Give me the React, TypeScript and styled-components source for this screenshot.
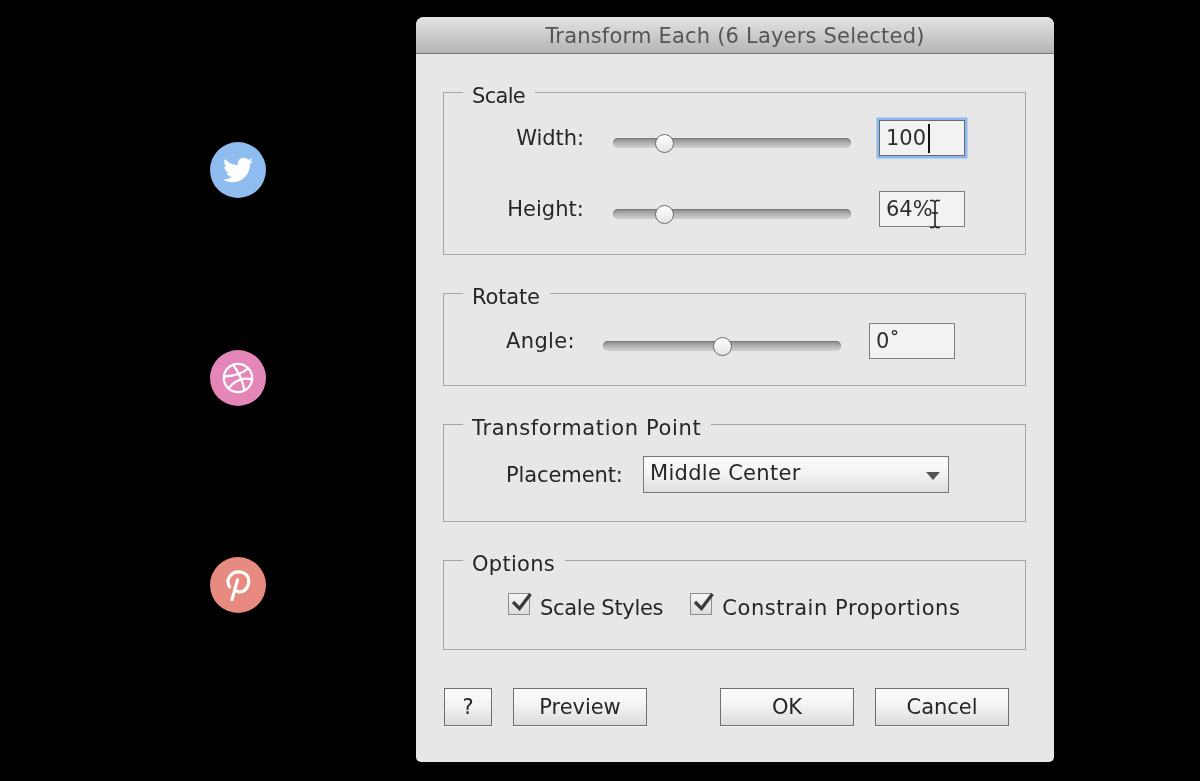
import styled, { createGlobalStyle } from "styled-components";
import { FaTwitter } from "react-icons/fa";
import { Dribbble } from "lucide-react";

const GlobalStyle = createGlobalStyle`
  html, body {
    margin: 0;
    padding: 0;
    background: #000;
    overflow: hidden;
  }
  * {
    box-sizing: border-box;
  }
`;

const Slider = ({ value }: { value: number }) => (
  <SliderTrack>
    <SliderKnob style={{ left: `${value}%` }} />
  </SliderTrack>
);

const Checkbox = ({ label, tracking }: { label: string; tracking: number }) => (
  <CheckLabel $tracking={tracking}>
    <CheckBoxBox>
      <svg width="26" height="24" viewBox="0 0 26 24">
        <path d="M4 8 L10.5 14.5 L21.5 0" fill="none" stroke="#3a3a3a" strokeWidth="3.2" />
      </svg>
    </CheckBoxBox>
    {label}
  </CheckLabel>
);

export default function App() {
  return (
    <Page>
      <GlobalStyle />
      <SocialColumn>
        <SocialCircle $color="#8fbdf0">
          <FaTwitter size={30} />
        </SocialCircle>
        <SocialCircle $color="#e586b8">
          <Dribbble size={34} strokeWidth={1.6} />
        </SocialCircle>
        <SocialCircle $color="#e78a80">
          <svg width="28" height="32" viewBox="0 -1 30 34">
            <path
              d="M6 18 C1 10 8 2 15.5 2 C24 2 28 8.5 26 15.5 C24 22.5 18 25 14 22.5 M14.5 10.5 L8.5 32"
              fill="none"
              stroke="#fff"
              strokeWidth="3.4"
              strokeLinecap="round"
            />
          </svg>
        </SocialCircle>
      </SocialColumn>

      <Dialog>
        <TitleBar>Transform Each (6 Layers Selected)</TitleBar>
        <DialogBody>
          <Group $height={180}>
            <GroupLegend $tracking={-0.7}>Scale</GroupLegend>
            <ScaleRow $top={10}>
              <ScaleLabel $tracking={-0.05}>Width:</ScaleLabel>
              <Slider value={21.5} />
              <FocusedInput>
                100
                <Caret />
              </FocusedInput>
            </ScaleRow>
            <ScaleRow $top={34}>
              <ScaleLabel $tracking={0.05}>Height:</ScaleLabel>
              <Slider value={21.5} />
              <TextInput>
                64%
                <IBeam width="14" height="30" viewBox="0 0 14 30">
                  <path
                    d="M2 1.5 H5.5 L7 3 L8.5 1.5 H12 M7 3 V27 M2 28.5 H5.5 L7 27 L8.5 28.5 H12 M4 14 H10"
                    fill="none"
                    stroke="#222"
                    strokeWidth="1.6"
                  />
                </IBeam>
              </TextInput>
            </ScaleRow>
          </Group>

          <Group $height={110}>
            <GroupLegend $tracking={-0.15}>Rotate</GroupLegend>
            <RotateRow>
              <FieldLabel $tracking={0.35}>Angle:</FieldLabel>
              <Slider value={50} />
              <TextInput>0˚</TextInput>
            </RotateRow>
          </Group>

          <Group $height={115}>
            <GroupLegend $tracking={0.65}>Transformation Point</GroupLegend>
            <PlacementRow>
              <FieldLabel $tracking={-0.1}>Placement:</FieldLabel>
              <SelectBox>
                Middle Center
                <SelectArrow />
              </SelectBox>
            </PlacementRow>
          </Group>

          <Group $height={107}>
            <GroupLegend $tracking={0.27}>Options</GroupLegend>
            <OptionsRow>
              <Checkbox label="Scale Styles" tracking={-0.3} />
              <Checkbox label="Constrain Proportions" tracking={0.55} />
            </OptionsRow>
          </Group>

          <ButtonBar>
            <ButtonSet>
              <DialogButton $width={48}>?</DialogButton>
              <DialogButton $width={134}>Preview</DialogButton>
            </ButtonSet>
            <ButtonSet>
              <DialogButton $width={134}>OK</DialogButton>
              <DialogButton $width={134}>Cancel</DialogButton>
            </ButtonSet>
          </ButtonBar>
        </DialogBody>
      </Dialog>
    </Page>
  );
}

const Page = styled.div`
  display: flex;
  align-items: flex-start;
  width: 1200px;
  height: 781px;
  padding: 17px 0 0 210px;
  background: #000;
  font-family: "DejaVu Sans", "Open Sans", sans-serif;
  font-size: 21px;
  color: #262626;
  filter: blur(0.4px);
`;

const SocialColumn = styled.div`
  display: flex;
  flex-direction: column;
  gap: 151.5px;
  width: 56px;
  margin-top: 125px;
`;

const SocialCircle = styled.div<{ $color: string }>`
  display: flex;
  align-items: center;
  justify-content: center;
  width: 56px;
  height: 56px;
  border-radius: 50%;
  background: ${(p) => p.$color};
  color: #fff;
`;

const Dialog = styled.div`
  display: flex;
  flex-direction: column;
  width: 638px;
  height: 745px;
  margin-left: 150px;
  border-radius: 8px 8px 5px 5px;
  background: #e7e7e7;
  overflow: hidden;
`;

const TitleBar = styled.div`
  display: flex;
  align-items: center;
  justify-content: center;
  height: 37px;
  padding-top: 2px;
  background: linear-gradient(#e4e4e4, #b4b4b4);
  border-bottom: 1px solid #777;
  color: #555;
  letter-spacing: 0.2px;
`;

const DialogBody = styled.div`
  display: flex;
  flex-direction: column;
  padding: 21px 28px 0 27px;
`;

const Group = styled.fieldset<{ $height: number }>`
  height: ${(p) => p.$height}px;
  margin: 0 0 21px;
  padding: 0;
  border: 1px solid #a5a5a5;
  min-width: 0;
`;

const GroupLegend = styled.legend<{ $tracking: number }>`
  margin-left: 19px;
  padding: 8px 10px 0 9px;
  line-height: 26px;
  font-size: 21px;
  letter-spacing: ${(p) => p.$tracking}px;
`;

const ScaleRow = styled.div<{ $top: number }>`
  display: flex;
  align-items: center;
  height: 37px;
  margin-top: ${(p) => p.$top}px;
`;

const ScaleLabel = styled.span<{ $tracking: number }>`
  width: 140px;
  text-align: right;
  margin-right: 29px;
  letter-spacing: ${(p) => p.$tracking}px;
`;

const RotateRow = styled.div`
  display: flex;
  align-items: center;
  height: 37px;
  margin-top: 12px;
  padding-left: 62px;
`;

const FieldLabel = styled.span<{ $tracking: number }>`
  width: 97px;
  white-space: nowrap;
  letter-spacing: ${(p) => p.$tracking}px;
`;

const SliderTrack = styled.div`
  position: relative;
  flex: none;
  width: 238px;
  height: 10px;
  margin: 10px 28px 0 0;
  border-radius: 5px;
  background: linear-gradient(#8a8a8a, #b5b5b5 55%, #d2d2d2);
  box-shadow: inset 0 1px 1px #777;
`;

const SliderKnob = styled.div`
  position: absolute;
  top: -4px;
  width: 19px;
  height: 19px;
  margin-left: -9.5px;
  border-radius: 50%;
  border: 1.5px solid #6e6e6e;
  background: linear-gradient(#fff, #e4e4e4);
`;

const TextInput = styled.div`
  position: relative;
  flex: none;
  display: flex;
  align-items: center;
  width: 86px;
  height: 36px;
  padding: 1px 0 0 6px;
  border: 1.5px solid #7d7d7d;
  background: #f2f2f2;
  letter-spacing: 0;
  line-height: 1;
  color: #2e2e2e;
`;

const FocusedInput = styled(TextInput)`
  border-color: #6b6b6b;
  box-shadow: 0 0 0 2.5px #8ab9ef;
`;

const Caret = styled.span`
  display: inline-block;
  width: 1.5px;
  height: 29px;
  margin-left: 2px;
  background: #111;
`;

const IBeam = styled.svg`
  position: absolute;
  left: 48px;
  top: 7px;
`;

const PlacementRow = styled.div`
  display: flex;
  align-items: center;
  height: 37px;
  margin-top: 15px;
  padding-left: 62px;
`;

const SelectBox = styled.div`
  display: flex;
  align-items: center;
  justify-content: space-between;
  width: 306px;
  height: 37px;
  margin-left: 40px;
  padding: 0 8px 4px 6px;
  border: 1.5px solid #777;
  background: linear-gradient(#fbfbfb, #f4f4f4 45%, #dfdfdf);
  letter-spacing: 0.3px;
`;

const SelectArrow = styled.span`
  width: 0;
  height: 0;
  margin-top: 6px;
  border-left: 7px solid transparent;
  border-right: 7px solid transparent;
  border-top: 8px solid #555;
`;

const OptionsRow = styled.div`
  display: flex;
  align-items: center;
  gap: 27px;
  padding: 19px 0 0 64px;
`;

const CheckLabel = styled.label<{ $tracking: number }>`
  display: flex;
  align-items: center;
  gap: 10px;
  letter-spacing: ${(p) => p.$tracking}px;
`;

const CheckBoxBox = styled.span`
  position: relative;
  display: block;
  width: 22px;
  height: 22px;
  margin-top: -8px;
  border: 1.5px solid #8c8c8c;
  background: linear-gradient(#f5f5f5, #dcdcdc);

  svg {
    position: absolute;
    left: 0;
    top: 0;
    overflow: visible;
  }
`;

const ButtonBar = styled.div`
  display: flex;
  justify-content: space-between;
  margin-top: 17px;
  padding: 0 17px 0 1px;
`;

const ButtonSet = styled.div`
  display: flex;
  gap: 21px;
`;

const DialogButton = styled.button<{ $width: number }>`
  width: ${(p) => p.$width}px;
  height: 38px;
  padding: 0;
  border: 1.5px solid #6f6f6f;
  background: linear-gradient(#fcfcfc, #f3f3f3 45%, #dcdcdc);
  box-shadow: 0 1px 0 #f7f7f7;
  font: inherit;
  letter-spacing: -0.05px;
  color: #262626;
`;
